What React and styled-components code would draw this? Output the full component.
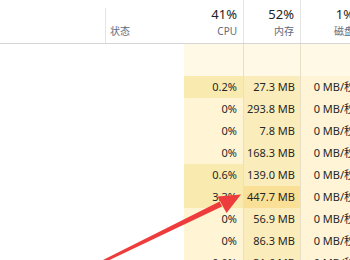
import React from 'react'
import styled, { createGlobalStyle } from 'styled-components'

const Global = createGlobalStyle`
html, body { margin:0; padding:0; background:#fff; }
body { font-family:"Noto Sans","Noto Sans CJK SC",sans-serif; }
`

const Page = styled.div`
position:relative;
width:350px;
height:260px;
overflow:hidden;
background:#fff;
`

const Table = styled.div`
display:grid;
grid-template-columns:105px 79px 59px 57px 60px;
width:360px;
`

const HeadCell = styled.div`
height:44px;
box-sizing:border-box;
border-bottom:1px solid #d5d5d5;
background:${p => p.divider ? 'linear-gradient(#e3e3e3,#e3e3e3) 0 ' + (p.inset || 0) + 'px / 1px 100% no-repeat' : 'none'};
display:flex;
flex-direction:column;
align-items:${p => p.left ? 'flex-start' : 'flex-end'};
justify-content:flex-end;
padding:${p => p.left ? '0 0 5px 5px' : '0 6px 5px 0'};
`

const HeadValue = styled.div`
font-size:13px;
line-height:16px;
color:#222;
margin-bottom:3px;
`

const HeadLabel = styled.div`
font-size:10px;
line-height:13px;
color:#5e6b7c;
`

const Band = styled.div`
height:32px;
background:${p => p.tint ? '#fff9e6' : '#fff'};
border-left:${p => p.divider ? '1px solid #e8e0c6' : 'none'};
box-sizing:border-box;
`

const Cell = styled.div`
height:22px;
box-sizing:border-box;
background:${p => p.bg};
border-left:${p => p.divider ? '1px solid #e8e0c6' : 'none'};
font-size:11px;
line-height:22px;
color:#262626;
text-align:right;
padding-right:${p => p.pad}px;
white-space:nowrap;
`

const Arrow = styled.svg`
position:absolute;
left:0;
top:0;
pointer-events:none;
`

const rows = [
  { cpu: '0.2%', mem: '27.3 MB', hot: true },
  { cpu: '0%', mem: '293.8 MB' },
  { cpu: '0%', mem: '7.8 MB' },
  { cpu: '0%', mem: '168.3 MB' },
  { cpu: '0.6%', mem: '139.0 MB', hot: true },
  { cpu: '3.3%', mem: '447.7 MB', hot: true, memHot: true },
  { cpu: '0%', mem: '56.9 MB' },
  { cpu: '0%', mem: '86.3 MB' },
  { cpu: '0.0%', mem: '31.6 MB' },
]

export default function App() {
  return (
    <Page>
      <Global />
      <Table>
        <HeadCell left />
        <HeadCell left divider inset={8}>
          <HeadLabel>状态</HeadLabel>
        </HeadCell>
        <HeadCell>
          <HeadValue>41%</HeadValue>
          <HeadLabel>CPU</HeadLabel>
        </HeadCell>
        <HeadCell divider>
          <HeadValue>52%</HeadValue>
          <HeadLabel>内存</HeadLabel>
        </HeadCell>
        <HeadCell divider>
          <HeadValue>1%</HeadValue>
          <HeadLabel>磁盘</HeadLabel>
        </HeadCell>

        <Band />
        <Band />
        <Band tint />
        <Band tint divider />
        <Band tint divider />

        {rows.map((r, i) => (
          <React.Fragment key={i}>
            <Cell bg="#fff" />
            <Cell bg="#fff" />
            <Cell bg={r.hot ? '#f9ebb0' : '#fff4d4'} pad={6}>{r.cpu}</Cell>
            <Cell bg={r.memHot ? '#f9e096' : '#fbedbb'} pad={5} divider>{r.mem}</Cell>
            <Cell bg="#fff5d6" pad={5} divider>0 MB/秒</Cell>
          </React.Fragment>
        ))}
      </Table>

      <Arrow width="350" height="260" viewBox="0 0 350 260">
        <polygon points="97,263 219.6,201.5 222,206.5 99,265" fill="#ee3b3b" />
        <polygon points="241,194.5 217.5,196.5 226.5,213" fill="#ee3b3b" />
      </Arrow>
    </Page>
  )
}
